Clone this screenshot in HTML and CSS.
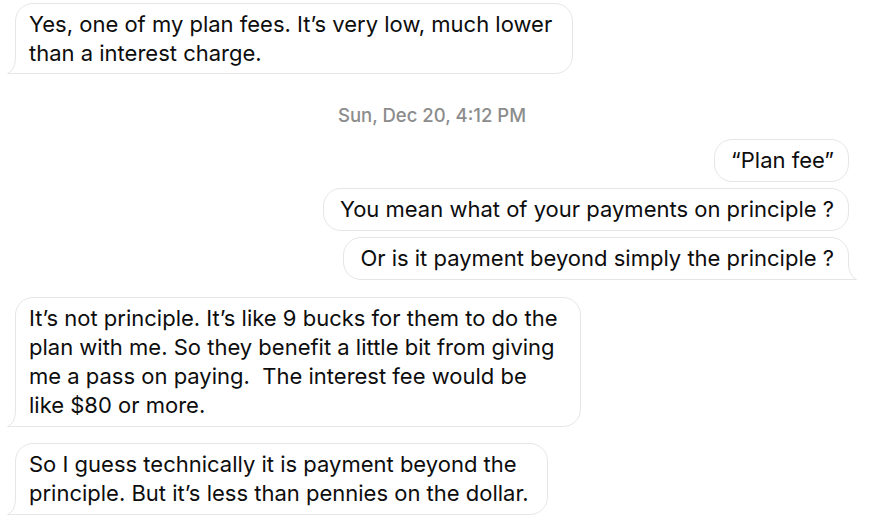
FILE: index.html
```html
<!DOCTYPE html>
<html>
<head>
<meta charset="utf-8">
<link rel="stylesheet" href="styles.css">
</head>
<body>
<div class="thread">
  <div class="row in">
    <div class="bubble tail-left w1">Yes, one of my plan fees. It’s very low, much lower<br>than a interest charge.
      <svg class="tail tail-l" width="22" height="20" viewBox="0 0 22 20"><path class="tf" d="M8.5,1 C8.5,11 6.5,16.5 0.5,19.5 L22,19.5 L22,1 Z"/><path class="ts" d="M8.5,1 C8.5,11 6.5,16.5 0.5,19.5 L22,19.5"/></svg>
    </div>
  </div>

  <div class="stamp">Sun, Dec 20, 4:12 PM</div>

  <div class="group out">
    <div class="bubble">“Plan fee”</div>
    <div class="bubble">You mean what of your payments on principle ?</div>
    <div class="bubble tail-right">Or is it payment beyond simply the principle ?
      <svg class="tail tail-r" width="22" height="20" viewBox="0 0 22 20"><path class="tf" d="M13.5,1 C13.5,11 15.5,16.5 21.5,19.5 L0,19.5 L0,1 Z"/><path class="ts" d="M13.5,1 C13.5,11 15.5,16.5 21.5,19.5 L0,19.5"/></svg>
    </div>
  </div>

  <div class="row in gap-big">
    <div class="bubble tail-left w4">It’s not principle. It’s like 9 bucks for them to do the<br>plan with me. So they benefit a little bit from giving<br>me a pass on paying.&nbsp; The interest fee would be<br>like $80 or more.
      <svg class="tail tail-l" width="22" height="20" viewBox="0 0 22 20"><path class="tf" d="M8.5,1 C8.5,11 6.5,16.5 0.5,19.5 L22,19.5 L22,1 Z"/><path class="ts" d="M8.5,1 C8.5,11 6.5,16.5 0.5,19.5 L22,19.5"/></svg>
    </div>
  </div>

  <div class="row in gap-big">
    <div class="bubble tail-left w5">So I guess technically it is payment beyond the<br>principle. But it’s less than pennies on the dollar.
      <svg class="tail tail-l" width="22" height="20" viewBox="0 0 22 20"><path class="tf" d="M8.5,1 C8.5,11 6.5,16.5 0.5,19.5 L22,19.5 L22,1 Z"/><path class="ts" d="M8.5,1 C8.5,11 6.5,16.5 0.5,19.5 L22,19.5"/></svg>
    </div>
  </div>
</div>
</body>
</html>
```

FILE: styles.css
```css
* { box-sizing: border-box; }
html, body {
  margin: 0;
  padding: 0;
  background: #ffffff;
}
body {
  font-family: Inter, "Liberation Sans", Arial, sans-serif;
  color: #0d0d0d;
  width: 884px;
  height: 532px;
  overflow: hidden;
}
.thread {
  display: flex;
  flex-direction: column;
  padding: 3px 35px 0 15px;
}
.row {
  display: flex;
}
.row.in { justify-content: flex-start; }
.gap-big { margin-top: 16px; }

.bubble {
  position: relative;
  background: #ffffff;
  border: 1px solid #e6e6e6;
  border-radius: 18px;
  padding: 6px 13px;
  font-size: 22px;
  line-height: 29px;
  white-space: nowrap;
  width: fit-content;
}
.tail-left { border-bottom-left-radius: 0; }
.tail-right { border-bottom-right-radius: 0; }

.w1 { width: 558px; padding-bottom: 5px; }
.w4 { width: 566px; }
.w5 { width: 533px; }

.tail {
  position: absolute;
  bottom: -1px;
  overflow: visible;
}
.tail-l { left: -9px; }
.tail-r { right: -9px; }
.tf { fill: #ffffff; stroke: none; }
.ts { fill: none; stroke: #e6e6e6; stroke-width: 1; }

.stamp {
  text-align: center;
  font-size: 18.5px;
  font-weight: 500;
  color: #8c8c8c;
  margin: 31px 0 14px 0;
  line-height: 20px;
}
.group {
  display: flex;
  flex-direction: column;
  align-items: flex-end;
  gap: 6px;
}
.group .bubble { padding: 6px 14px 6px 16px; }
.group + .row { margin-top: 17px; }
```
